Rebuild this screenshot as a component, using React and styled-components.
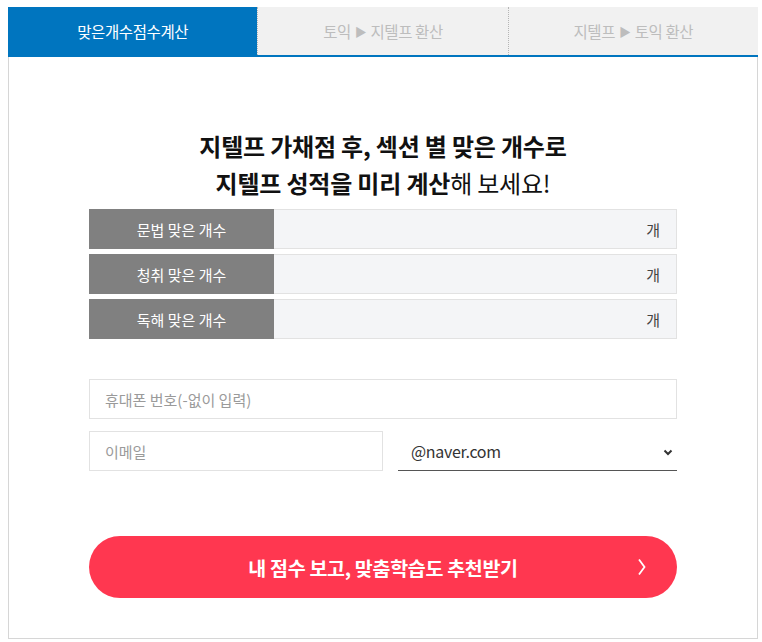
import styled, { createGlobalStyle } from 'styled-components';

const GlobalStyle = createGlobalStyle`
  body {
    margin: 0;
    background: #fff;
    font-family: "Noto Sans CJK KR", "Noto Sans", sans-serif;
    color: #222;
  }
  * { box-sizing: border-box; }
`;

const Page = styled.div`
  padding: 7px 0 0 8px;
`;

const Panel = styled.div`
  width: 750px;
`;

const TabBar = styled.div`
  display: flex;
  border-bottom: 2px solid #0075bf;
`;

const Tab = styled.div`
  flex: 1;
  height: 48px;
  display: flex;
  align-items: center;
  justify-content: center;
  font-size: 15.5px;
  letter-spacing: -0.4px;
  background: ${p => (p.$active ? '#0075bf' : '#f1f1f1')};
  color: ${p => (p.$active ? '#fff' : '#bdbdbd')};
  border-left: ${p => (p.$first ? 'none' : '1px dotted #b5b5b5')};
`;

const Arrow = styled.span`
  font-size: 12px;
  margin: 0 4px;
`;

const Body = styled.div`
  border: 1px solid #d6d6d6;
  border-top: none;
  padding: 70px 80px 40px;
`;

const Title = styled.h2`
  margin: 0 0 8px;
  text-align: center;
  font-size: 24px;
  line-height: 37px;
  font-weight: 700;
  color: #111;
  letter-spacing: -0.2px;
`;

const Light = styled.span`
  font-weight: 400;
`;

const Rows = styled.div`
  display: flex;
  flex-direction: column;
  gap: 5px;
`;

const Row = styled.div`
  display: flex;
  height: 40px;
`;

const RowLabel = styled.div`
  width: 185px;
  background: #808080;
  color: #fff;
  font-size: 15px;
  display: flex;
  align-items: center;
  justify-content: center;
`;

const CountBox = styled.div`
  flex: 1;
  display: flex;
  align-items: center;
  background: #f4f5f7;
  border: 1px solid #e2e2e2;
  border-left: none;
  padding: 0 16px 0 12px;
`;

const CountInput = styled.input`
  flex: 1;
  border: none;
  background: transparent;
  outline: none;
  font: inherit;
`;

const Unit = styled.span`
  font-size: 15px;
  color: #444;
`;

const Contact = styled.div`
  margin-top: 40px;
  display: flex;
  flex-direction: column;
  gap: 12px;
`;

const Field = styled.input`
  height: 40px;
  width: ${p => p.$width || '100%'};
  border: 1px solid #e2e2e2;
  padding: 0 15px;
  font-family: "Noto Sans CJK KR", sans-serif;
  font-size: 15px;
  color: #333;
  outline: none;
  &::placeholder { color: #9a9a9a; }
`;

const EmailRow = styled.div`
  display: flex;
  align-items: stretch;
  gap: 15px;
`;

const SelectWrap = styled.div`
  position: relative;
  flex: 1;
  display: flex;
`;

const Select = styled.select`
  appearance: none;
  flex: 1;
  height: 40px;
  border: none;
  border-bottom: 1px solid #555;
  border-radius: 0;
  background: #fff;
  padding: 0 13px;
  font-family: "Noto Sans CJK KR", sans-serif;
  font-size: 16px;
  color: #333;
  letter-spacing: -0.3px;
  outline: none;
`;

const Caret = styled.svg`
  position: absolute;
  right: 4px;
  top: 18px;
  pointer-events: none;
`;

const Submit = styled.button`
  margin-top: 65px;
  width: 100%;
  height: 62px;
  border: none;
  border-radius: 31px;
  background: #ff3750;
  color: #fff;
  font-family: "Noto Sans CJK KR", sans-serif;
  font-size: 19.5px;
  font-weight: 700;
  letter-spacing: -0.3px;
  display: flex;
  align-items: center;
  justify-content: center;
  position: relative;
  cursor: pointer;
`;

const Chevron = styled.svg`
  position: absolute;
  right: 30px;
  top: 22px;
`;

const fields = ['문법 맞은 개수', '청취 맞은 개수', '독해 맞은 개수'];

export default function App() {
  return (
    <Page>
      <GlobalStyle />
      <Panel>
        <TabBar>
          <Tab $active $first>맞은개수점수계산</Tab>
          <Tab>토익 <Arrow>▶</Arrow> 지텔프 환산</Tab>
          <Tab>지텔프 <Arrow>▶</Arrow> 토익 환산</Tab>
        </TabBar>
        <Body>
          <Title>
            지텔프 가채점 후, 섹션 별 맞은 개수로
            <br />
            지텔프 성적을 미리 계산<Light>해 보세요!</Light>
          </Title>
          <Rows>
            {fields.map(f => (
              <Row key={f}>
                <RowLabel>{f}</RowLabel>
                <CountBox>
                  <CountInput type="text" />
                  <Unit>개</Unit>
                </CountBox>
              </Row>
            ))}
          </Rows>
          <Contact>
            <Field placeholder="휴대폰 번호(-없이 입력)" />
            <EmailRow>
              <Field $width="294px" placeholder="이메일" />
              <SelectWrap>
                <Select defaultValue="naver">
                  <option value="naver">@naver.com</option>
                  <option value="gmail">@gmail.com</option>
                  <option value="daum">@daum.net</option>
                </Select>
                <Caret width="10" height="7" viewBox="0 0 10 7">
                  <path d="M1.5 1.5 L5 5 L8.5 1.5" fill="none" stroke="#333" strokeWidth="2" />
                </Caret>
              </SelectWrap>
            </EmailRow>
          </Contact>
          <Submit>
            내 점수 보고, 맞춤학습도 추천받기
            <Chevron width="10" height="18" viewBox="0 0 10 18">
              <path d="M2 1.5 L7.5 9 L2 16.5" fill="none" stroke="#fff" strokeWidth="1.8" />
            </Chevron>
          </Submit>
        </Body>
      </Panel>
    </Page>
  );
}
